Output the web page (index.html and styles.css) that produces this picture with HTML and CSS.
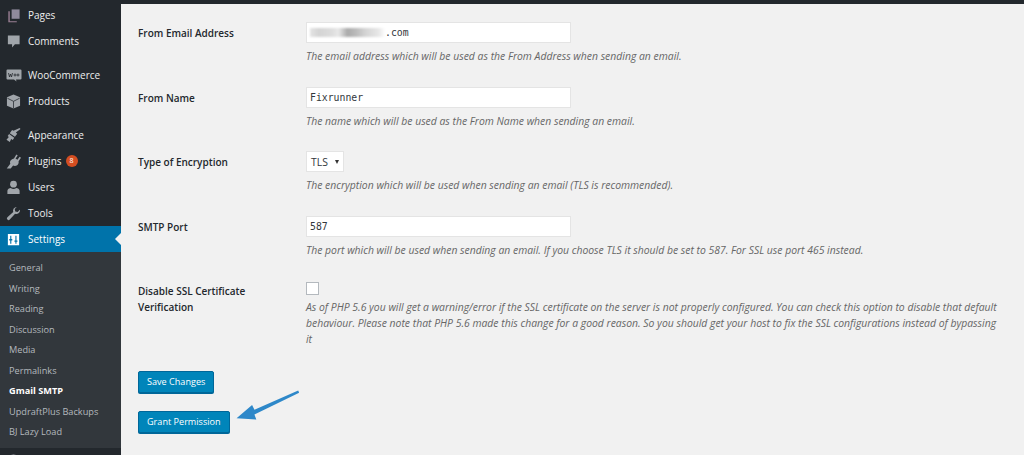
FILE: index.html
```html
<!DOCTYPE html>
<html lang="en">
<head>
    <meta charset="UTF-8">
    <title>Gmail SMTP</title>
    <link rel="stylesheet" href="styles.css">
</head>
<body>
<div class="page">
    <div class="sidebar">
        <ul class="menu">
            <li><svg class="icon" viewBox="0 0 16 16"><path class="icon-pages" d="M6 1.500h8.500v10H6z"/><path class="icon-pages-back" d="M4 3.500v10.500h7.500v1.200H2.500V3.500z"/></svg>Pages</li>
            <li><svg class="icon" viewBox="0 0 16 16"><path d="M2 1.500h12.500v9.500H9.500l-3 3.500V11H2z"/></svg>Comments</li>
        </ul>
        <ul class="menu">
            <li><svg class="icon icon-woo" viewBox="0 0 16 16"><path d="M1.500 2.500h13a1 1 0 0 1 1 1v8a1 1 0 0 1-1 1H10l.5 2-2.500-2H1.500a1 1 0 0 1-1-1v-8a1 1 0 0 1 1-1z"/><path class="cut" d="M2.500 6l1 4 1-3 1 3 1-4M8 8a1 1 0 1 0 2 0a1 1 0 1 0-2 0M11 8a1 1 0 1 0 2 0a1 1 0 1 0-2 0"/></svg>WooCommerce</li>
            <li><svg class="icon" viewBox="0 0 16 16"><path d="M8 .5l7 3v9l-7 3-7-3v-9z"/><path class="cut" d="M1.500 4.500L8 7.800l6.500-3.300M8 7.800v7.500"/></svg>Products</li>
        </ul>
        <ul class="menu">
            <li><svg class="icon" viewBox="0 0 16 16"><path d="M15.500 1l-1-1L8 3 6.500 2 4 5.500l5.500 3.800L12 6 10.500 4.800z"/><path d="M3.300 6.500L8.800 10.300l-1.600 2.500-1.700-1-1.500 3.200L.5 12.500 3 9.500 1.800 8.600z"/></svg>Appearance</li>
            <li><svg class="icon" viewBox="0 0 16 16"><path d="M11 .5l1.500 1-2.300 3.200 2 1.500 2.300-3.200 1.500 1.100-2.600 3.600c.4 1.600-.2 3.200-1.500 4.200-1.300 1-3 1-4.300.4L5 15.500H.8l3.800-5.200C4 9 4.200 7.400 5.500 6.400L6.500 5.700l2-.9z"/></svg>Plugins<span class="badge">8</span></li>
            <li><svg class="icon" viewBox="0 0 16 16"><circle cx="8" cy="4.500" r="3.600"/><path d="M1.500 15v-3.500c0-1.800 2-3 3.500-3 1 .8 2 1 3 1s2-.2 3-1c1.500 0 3.500 1.200 3.500 3V15z"/></svg>Users</li>
            <li><svg class="icon" viewBox="0 0 16 16"><path d="M15 4.500a4 4 0 0 1-5.300 3.800L4 14.500a1.700 1.700 0 0 1-2.500-2.500l6.200-5.700A4 4 0 0 1 11.500 1L9.300 3.300l.6 2.500 2.500.6L14.700 4z"/></svg>Tools</li>
            <li class="current"><svg class="icon" viewBox="0 0 16 16"><path fill-rule="evenodd" d="M2 2h12v12H2zM4.500 4v3.500h-1V9h1v3.500h1.200V9h1V7.500h-1V4zM10 4v5H9v1.500h1v2h1.200v-2h1V9h-1V4z"/></svg>Settings</li>
        </ul>
        <ul class="submenu">
            <li>General</li>
            <li>Writing</li>
            <li>Reading</li>
            <li>Discussion</li>
            <li>Media</li>
            <li>Permalinks</li>
            <li class="active">Gmail SMTP</li>
            <li>UpdraftPlus Backups</li>
            <li>BJ Lazy Load</li>
        </ul>
        <ul class="menu">
            <li><svg class="icon" viewBox="0 0 16 16"><circle cx="8" cy="8" r="6.500"/></svg></li>
        </ul>
    </div>
    <div class="main">
        <div class="topbar"></div>
        <form class="settings">
            <div class="row">
                <label class="name">From Email Address</label>
                <div class="value">
                    <div class="field">
                        <span class="blur"></span>.com
                    </div>
                    <p class="desc">The email address which will be used as the From Address when sending an email.</p>
                </div>
            </div>
            <div class="row">
                <label class="name">From Name</label>
                <div class="value">
                    <input class="field" type="text" value="Fixrunner">
                    <p class="desc">The name which will be used as the From Name when sending an email.</p>
                </div>
            </div>
            <div class="row">
                <label class="name">Type of Encryption</label>
                <div class="value">
                    <div class="select">TLS<span class="caret"></span></div>
                    <p class="desc">The encryption which will be used when sending an email (TLS is recommended).</p>
                </div>
            </div>
            <div class="row">
                <label class="name">SMTP Port</label>
                <div class="value">
                    <input class="field" type="text" value="587">
                    <p class="desc">The port which will be used when sending an email. If you choose TLS it should be set to 587. For SSL use port 465 instead.</p>
                </div>
            </div>
            <div class="row row-check">
                <label class="name">Disable SSL Certificate Verification</label>
                <div class="value">
                    <input class="check" type="checkbox">
                    <p class="desc">As of PHP 5.6 you will get a warning/error if the SSL certificate on the server is not properly configured. You can check this option to disable that default behaviour. Please note that PHP 5.6 made this change for a good reason. So you should get your host to fix the SSL configurations instead of bypassing it</p>
                </div>
            </div>
            <button class="btn btn-save" type="button">Save Changes</button>
            <button class="btn" type="button">Grant Permission</button>
            <svg class="arrow" viewBox="0 0 72 34"><path d="M66.500 1.500L20 22l-2.500-5L1 31l21 1.500-2-5.500L67.500 4z"/></svg>
        </form>
    </div>
</div>
</body>
</html>
```

FILE: styles.css
```css
* {
    box-sizing: border-box;
}
html, body {
    margin: 0;
    height: 100%;
    overflow: hidden;
}
body {
    font-family: "Open Sans", "Liberation Sans", sans-serif;
    font-size: 10px;
    background: #f1f1f1;
    color: #444;
}
ul {
    list-style: none;
    margin: 0;
    padding: 0;
}
.page {
    display: flex;
    height: 455px;
}

/* left menu */
.sidebar {
    width: 121px;
    flex: none;
    padding-top: 2px;
    background: #23282d;
    color: #eee;
    overflow: hidden;
}
.menu {
    margin-bottom: 8px;
}
.menu:nth-child(3) {
    margin-bottom: 0;
}
.menu li {
    position: relative;
    display: flex;
    align-items: center;
    height: 26px;
    padding-left: 6px;
    font-size: 10px;
}
.icon {
    width: 15px;
    height: 15px;
    margin-right: 7px;
    fill: #a0a5aa;
}
.icon-pages {
    fill: #8f8a9c;
}
.icon-pages-back {
    fill: #9a7f94;
}
.icon-woo {
    width: 16px;
    height: 16px;
    margin-right: 6px;
}
.icon .cut {
    fill: none;
    stroke: #23282d;
    stroke-width: .8;
}
.badge {
    display: inline-block;
    width: 12px;
    height: 12px;
    margin-left: 4px;
    border-radius: 50%;
    background: #d54e21;
    color: #fff;
    font-size: 7px;
    line-height: 12px;
    text-align: center;
}
.menu .current {
    background: #0073aa;
    color: #fff;
}
.current .icon {
    fill: #fff;
}
.current::after {
    content: "";
    position: absolute;
    right: 0;
    top: 7px;
    border: 6px solid transparent;
    border-right-color: #f1f1f1;
    border-left: 0;
}
.submenu {
    padding: 6px 0 5px;
    background: #32373c;
    color: #b4b9be;
    font-size: 9.2px;
}
.submenu li {
    height: 20.5px;
    line-height: 20.5px;
    padding-left: 9px;
    white-space: nowrap;
}
.submenu .active {
    color: #fff;
    font-weight: 700;
}

/* settings form */
.main {
    flex: 1;
    min-width: 0;
}
.topbar {
    height: 4px;
    background: #23282d;
}
.settings {
    position: relative;
    padding: 18px 0 0 17px;
}
.row {
    display: flex;
    height: 64.5px;
}
.row-check {
    height: 91px;
    padding-top: 2px;
}
.name {
    width: 168px;
    flex: none;
    padding-top: 3px;
    font-weight: 600;
    font-size: 10px;
    line-height: 16px;
    color: #23282d;
}
.row-check .name {
    width: 168px;
    padding-right: 20px;
    padding-top: 1px;
}
.value {
    flex: 1;
    min-width: 0;
}
.field {
    display: block;
    width: 265px;
    height: 21px;
    padding: 0 4px 0 3px;
    margin: 0;
    border: 1px solid #e4e4e4;
    border-radius: 0;
    outline: none;
    background: #fff;
    color: #32373c;
    font-family: "DejaVu Sans Mono", monospace;
    font-size: 9.8px;
    line-height: 20px;
}
.blur {
    display: inline-block;
    width: 75px;
    height: 9px;
    vertical-align: -1px;
    filter: blur(1.2px);
    background: linear-gradient(90deg, #e4e4e4 0, #d4d4d4 12%, #dcdcdc 28%, #e8e8e8 38%, #aaa 50%, #bcbcbc 62%, #d4d4d4 74%, #e8e8e8 92%, #fff 100%);
}
.select {
    display: flex;
    align-items: center;
    width: 38px;
    height: 21px;
    padding-left: 4px;
    border: 1px solid #e4e4e4;
    background: #fff;
    color: #32373c;
    font-size: 10.4px;
}
.caret {
    margin-left: 7px;
    border-top: 4px solid #333;
    border-left: 2.5px solid transparent;
    border-right: 2.500px solid transparent;
}
.check {
    display: block;
    appearance: none;
    width: 13px;
    height: 13px;
    margin: 0;
    border: 1px solid #b4b9be;
    background: #fff;
}
.desc {
    margin: 5px 0 0;
    max-width: 695px;
    font-size: 10.4px;
    font-style: italic;
    line-height: 16px;
    color: #666;
}
.row-check .desc {
    margin-top: 3.500px;
}
.btn {
    display: block;
    height: 22px;
    padding: 0 8px;
    border: 1px solid #006799;
    border-radius: 2px;
    background: #0085ba;
    box-shadow: 0 1px 0 #006799;
    color: #fff;
    font-family: inherit;
    font-size: 9.1px;
    line-height: 20px;
}
.btn-save {
    margin-bottom: 18px;
}
.arrow {
    position: absolute;
    left: 113px;
    top: 385px;
    width: 71px;
    height: 32px;
    fill: #2e88c9;
}
```
